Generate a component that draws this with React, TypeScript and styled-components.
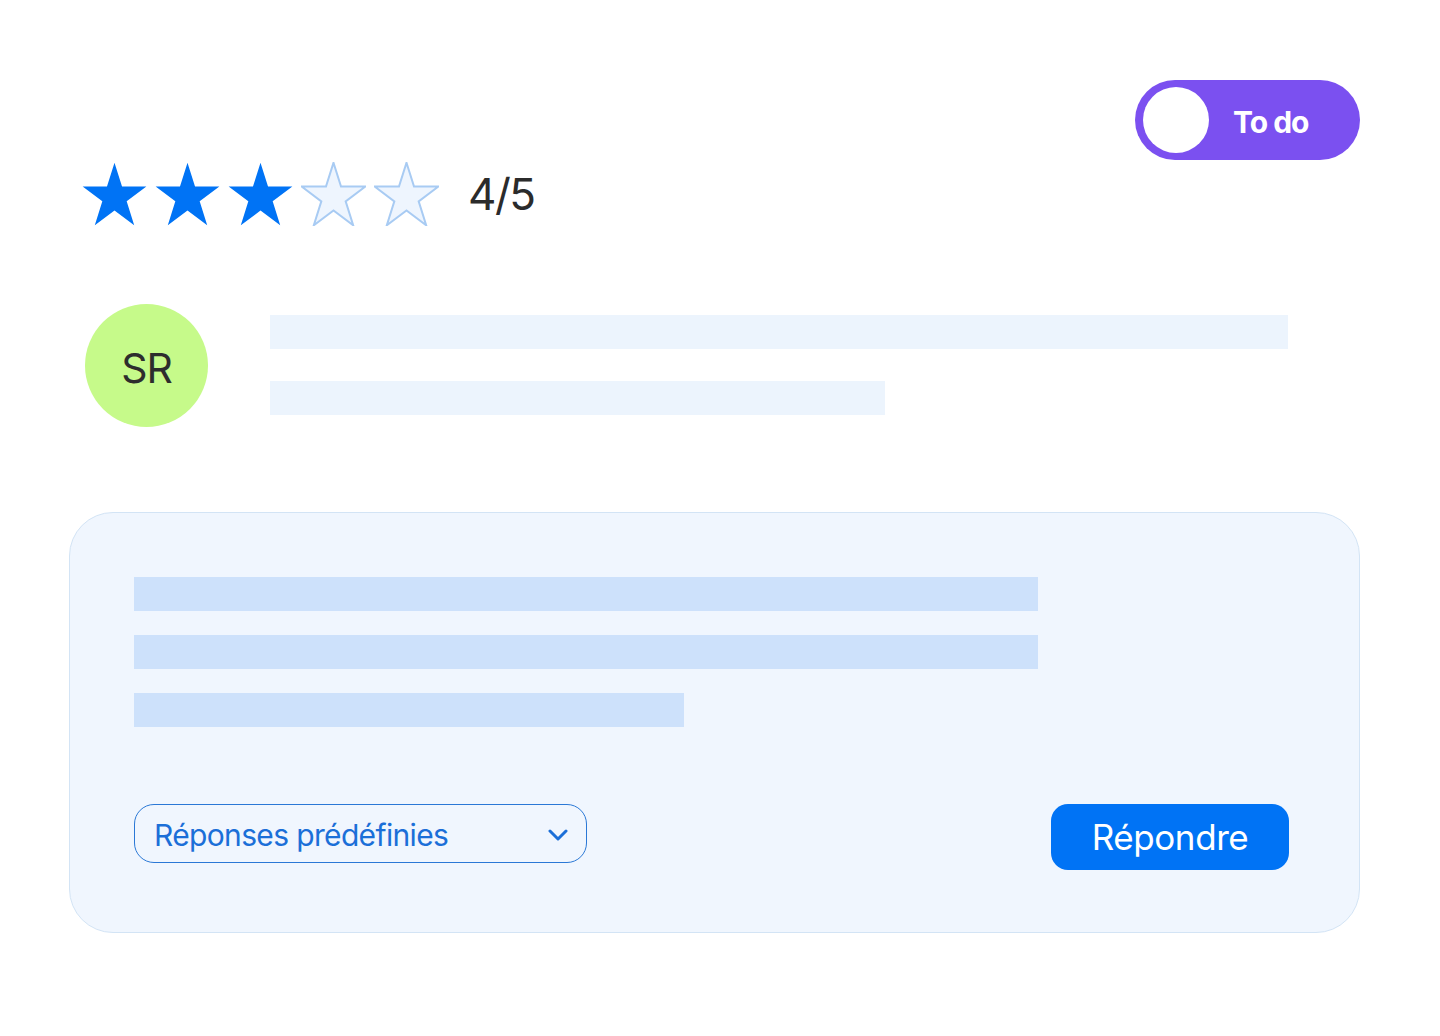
import React from "react";
import styled, { createGlobalStyle } from "styled-components";

const GlobalStyle = createGlobalStyle`
  html, body { margin: 0; padding: 0; background: #ffffff; }
  body { font-family: Inter, "Noto Sans", "Liberation Sans", sans-serif; }
  * { box-sizing: border-box; }
`;

const Page = styled.div`
  width: 1440px;
  height: 1036px;
  display: flex;
  flex-direction: column;
  padding: 80px 80px 0 69px;
  background: #ffffff;
`;

const Header = styled.div`
  display: flex;
  justify-content: flex-end;
`;

const Toggle = styled.div`
  width: 225px;
  height: 80px;
  border-radius: 40px;
  background: #7b50f0;
  display: flex;
  align-items: center;
  padding-left: 8px;
  gap: 24px;
`;

const Knob = styled.div`
  width: 66px;
  height: 66px;
  border-radius: 50%;
  background: #ffffff;
`;

const ToggleLabel = styled.span`
  color: #ffffff;
  font-weight: 700;
  font-size: 30px;
  letter-spacing: -1px;
  line-height: 1;
  margin-top: 3px;
`;

const RatingRow = styled.div`
  display: flex;
  align-items: center;
  gap: 8px;
  margin-left: 13px;
  margin-top: 2px;
`;

const StarSvg = styled.svg`
  width: 65px;
  height: 64px;
  display: block;
`;

const Score = styled.span`
  font-size: 44px;
  color: #2b2b2b;
  margin-left: 21px;
  line-height: 1;
  letter-spacing: -1.5px;
`;

const ReviewRow = styled.div`
  display: flex;
  align-items: flex-start;
  margin-top: 78px;
  margin-left: 16px;
`;

const Avatar = styled.div`
  width: 123px;
  height: 123px;
  border-radius: 50%;
  background: #c6fa8a;
  display: flex;
  align-items: center;
  justify-content: center;
  font-size: 41px;
  color: #2d2d2d;
  letter-spacing: -1px;
  flex: none;
  padding-top: 4px;
`;

const Lines = styled.div`
  display: flex;
  flex-direction: column;
  gap: 32px;
  margin-left: 62px;
  margin-top: 11px;
`;

const Line = styled.div<{ $w: number; $c: string }>`
  width: ${(p) => p.$w}px;
  height: 34px;
  background: ${(p) => p.$c};
`;

const Card = styled.div`
  margin-top: 85px;
  width: 1291px;
  height: 421px;
  border: 1px solid #d3e4f5;
  border-radius: 44px;
  background: #f0f6fe;
  padding: 64px 70px 62px 64px;
  display: flex;
  flex-direction: column;
`;

const Bars = styled.div`
  display: flex;
  flex-direction: column;
  gap: 24px;
`;

const Actions = styled.div`
  margin-top: 77px;
  display: flex;
  justify-content: space-between;
  align-items: flex-start;
`;

const Select = styled.div`
  width: 453px;
  height: 59px;
  border: 1px solid #2a78d6;
  border-radius: 20px;
  display: flex;
  align-items: center;
  justify-content: space-between;
  padding: 2px 18px 0 19px;
  color: #1b6fd8;
  font-size: 30px;
  letter-spacing: -0.65px;
`;

const Chevron = styled.svg`
  width: 20px;
  height: 12px;
  display: block;
`;

const ReplyButton = styled.button`
  width: 238px;
  height: 66px;
  border: none;
  border-radius: 17px;
  background: #0073f5;
  color: #ffffff;
  font-family: Inter, "Noto Sans", "Liberation Sans", sans-serif;
  font-size: 35px;
  letter-spacing: -0.4px;
  display: flex;
  align-items: center;
  justify-content: center;
  padding: 0;
`;

const STAR_POINTS =
  "50,0 61.23,34.55 97.55,34.55 68.17,55.9 79.39,90.45 50,69.1 20.61,90.45 31.83,55.9 2.45,34.55 38.77,34.55";

const Star: React.FC<{ filled: boolean }> = ({ filled }) => (
  <StarSvg viewBox="1.5 -1 97 92.5" preserveAspectRatio="none">
    <polygon
      points={STAR_POINTS}
      fill={filled ? "#0073f5" : "#eef5fe"}
      stroke={filled ? "#0073f5" : "#a8cbf3"}
      strokeWidth={filled ? 0 : 2}
      strokeLinejoin="miter"
      vectorEffect="non-scaling-stroke"
    />
  </StarSvg>
);

export default function App() {
  return (
    <>
      <GlobalStyle />
      <Page>
        <Header>
          <Toggle>
            <Knob />
            <ToggleLabel>To do</ToggleLabel>
          </Toggle>
        </Header>
        <RatingRow>
          {[0, 1, 2, 3, 4].map((i) => (
            <Star key={i} filled={i < 3} />
          ))}
          <Score>4/5</Score>
        </RatingRow>
        <ReviewRow>
          <Avatar>SR</Avatar>
          <Lines>
            <Line $w={1018} $c="#ecf4fd" />
            <Line $w={615} $c="#ecf4fd" />
          </Lines>
        </ReviewRow>
        <Card>
          <Bars>
            <Line $w={904} $c="#cde1fb" />
            <Line $w={904} $c="#cde1fb" />
            <Line $w={550} $c="#cde1fb" />
          </Bars>
          <Actions>
            <Select>
              <span>Réponses prédéfinies</span>
              <Chevron viewBox="0 0 20 12">
                <polyline
                  points="2,2 10,10 18,2"
                  fill="none"
                  stroke="#1b6fd8"
                  strokeWidth="3"
                  strokeLinecap="round"
                  strokeLinejoin="round"
                />
              </Chevron>
            </Select>
            <ReplyButton>Répondre</ReplyButton>
          </Actions>
        </Card>
      </Page>
    </>
  );
}
